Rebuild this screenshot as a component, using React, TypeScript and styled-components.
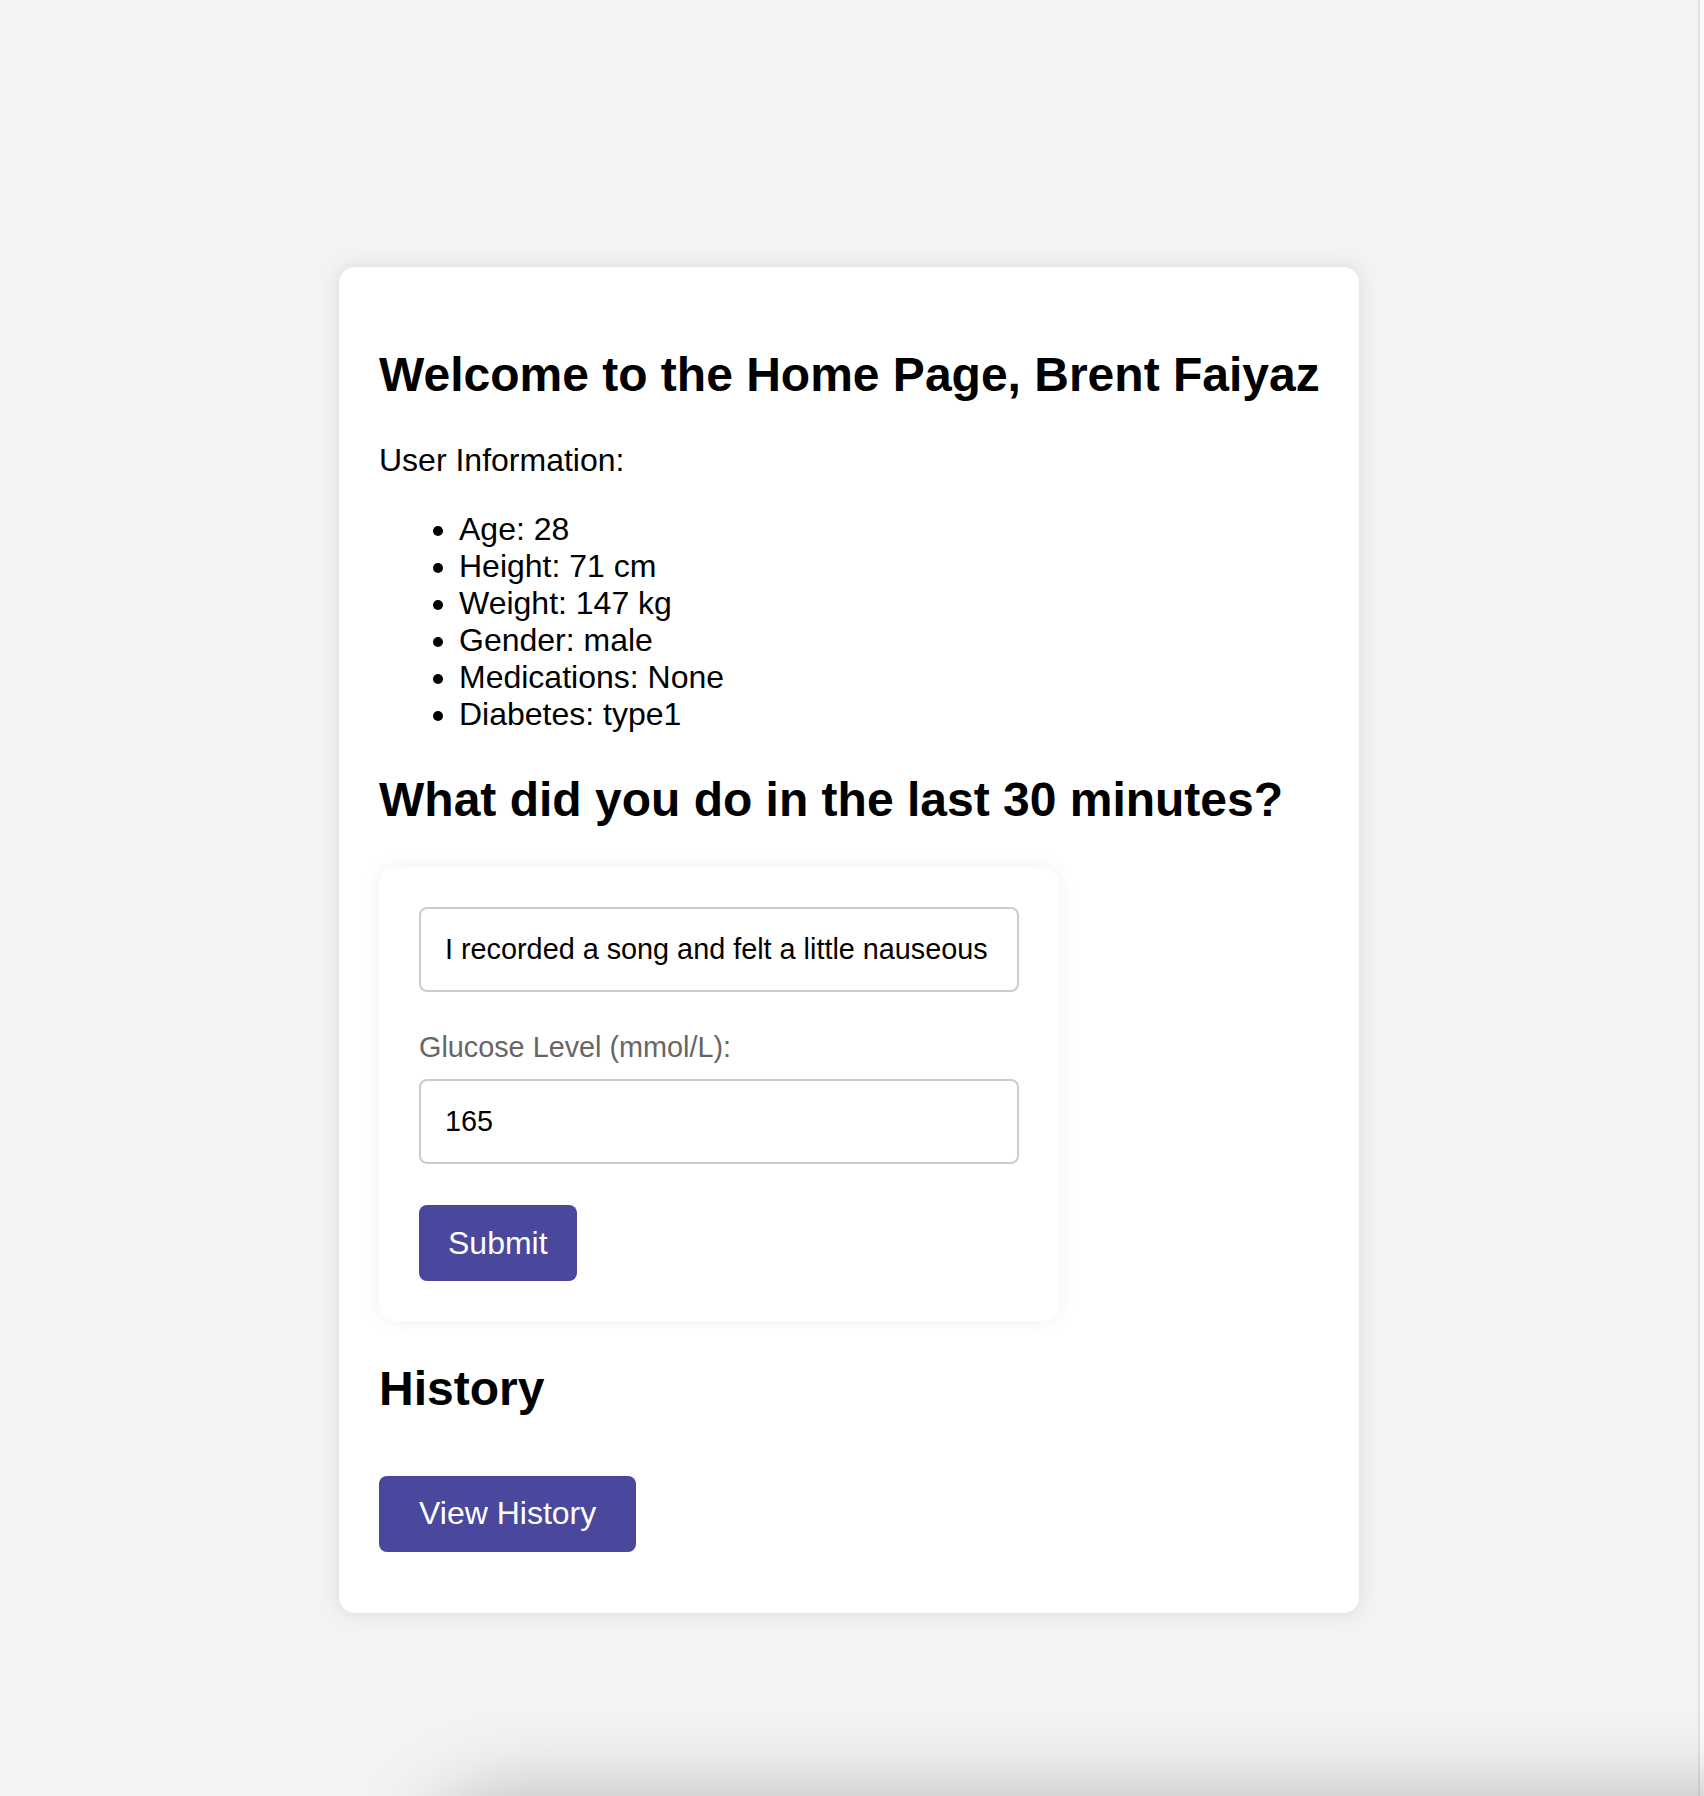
import React from "react";
import styled, { createGlobalStyle } from "styled-components";

const GlobalStyle = createGlobalStyle`
  html, body {
    margin: 0;
    padding: 0;
    background: #f3f3f3;
  }
  body {
    font-family: "Liberation Sans", Arial, Helvetica, sans-serif;
    color: #000;
  }
`;

const Shell = styled.div`
  position: relative;
  display: flex;
  flex-direction: row;
  height: 1796px;
  overflow: hidden;
  background: #f3f3f3;
`;

const Main = styled.main`
  flex: 1;
  display: flex;
  flex-direction: column;
  align-items: center;
  padding-top: 267px;
`;

const Edge = styled.div`
  width: 4px;
  border-left: 2px solid #e2e2e2;
  background: #f9f9f9;
`;

const DockShadow = styled.div`
  position: absolute;
  left: 450px;
  right: -200px;
  top: 1820px;
  height: 200px;
  border-radius: 60px;
  background: #d4d4d4;
  box-shadow: 0 0 80px 24px rgba(0, 0, 0, 0.25);
  pointer-events: none;
`;

const Card = styled.section`
  box-sizing: border-box;
  width: 1020px;
  padding: 40px;
  background: #fff;
  border-radius: 16px;
  box-shadow: 0 0 20px rgba(0, 0, 0, 0.1);
`;

const Heading = styled.h2`
  margin: 39.84px 0;
  font-size: 48px;
  font-weight: 700;
  line-height: normal;
  white-space: nowrap;
`;

const Intro = styled.p`
  margin: 32px 0;
  font-size: 32px;
  line-height: normal;
`;

const InfoList = styled.ul`
  margin: 32px 0;
  padding-left: 80px;
  font-size: 32px;
  line-height: normal;
  list-style: disc;
`;

const InfoItem = styled.li``;

const FormBox = styled.div`
  box-sizing: border-box;
  width: 680px;
  padding: 40px;
  background: #fff;
  border-radius: 16px;
  box-shadow: 0 0 20px rgba(0, 0, 0, 0.06);
`;

const Form = styled.form`
  display: flex;
  flex-direction: column;
  align-items: flex-start;
`;

const Field = styled.input<{ $gap: number }>`
  box-sizing: border-box;
  width: 600px;
  height: 85px;
  margin: 0 0 ${(p) => p.$gap}px;
  padding: 0 24px;
  border: 2px solid #cccccc;
  border-radius: 8px;
  background: #fff;
  font-family: "Liberation Sans", Arial, Helvetica, sans-serif;
  font-size: 28.8px;
  color: #000;
  outline: none;
`;

const Label = styled.label`
  display: block;
  margin: 0 0 15px;
  font-size: 28.8px;
  line-height: normal;
  color: #666;
`;

const Button = styled.button<{ $padX: number; $mt: number; $mb: number }>`
  box-sizing: border-box;
  height: 76px;
  margin: ${(p) => p.$mt}px 0 ${(p) => p.$mb}px;
  padding: 0 ${(p) => p.$padX}px;
  border: none;
  border-radius: 8px;
  background: #4a489c;
  color: #fff;
  font-family: "Liberation Sans", Arial, Helvetica, sans-serif;
  font-size: 32px;
  line-height: normal;
  cursor: pointer;
`;

const items = [
  "Age: 28",
  "Height: 71 cm",
  "Weight: 147 kg",
  "Gender: male",
  "Medications: None",
  "Diabetes: type1",
];

export default function App() {
  return (
    <>
      <GlobalStyle />
      <Shell>
        <Main>
          <Card>
            <Heading>Welcome to the Home Page, Brent Faiyaz</Heading>
            <Intro>User Information:</Intro>
            <InfoList>
              {items.map((t) => (
                <InfoItem key={t}>{t}</InfoItem>
              ))}
            </InfoList>
            <Heading>What did you do in the last 30 minutes?</Heading>
            <FormBox>
              <Form onSubmit={(e) => e.preventDefault()}>
                <Field
                  $gap={39}
                  type="text"
                  defaultValue="I recorded a song and felt a little nauseous"
                />
                <Label htmlFor="glucose">Glucose Level (mmol/L):</Label>
                <Field $gap={0} id="glucose" type="text" defaultValue="165" />
                <Button type="submit" $padX={29} $mt={41} $mb={0}>
                  Submit
                </Button>
              </Form>
            </FormBox>
            <Heading>History</Heading>
            <Button type="button" $padX={40} $mt={20} $mb={21}>
              View History
            </Button>
          </Card>
        </Main>
        <Edge />
        <DockShadow />
      </Shell>
    </>
  );
}
